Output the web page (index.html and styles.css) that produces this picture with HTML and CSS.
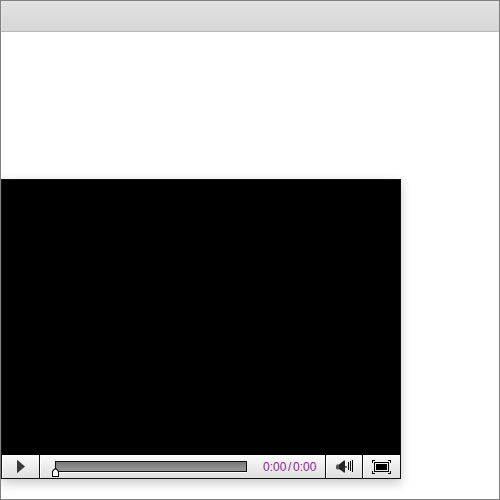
FILE: index.html
```
<!DOCTYPE html>
<html lang="en">
<head>
<meta charset="utf-8">
<title>Video player</title>
<link rel="stylesheet" href="styles.css">
</head>
<body>
<div class="window">
  <header class="toolbar"></header>
  <main class="player">
    <div class="screen"></div>
    <div class="controls">
      <button class="btn play" aria-label="Play">
        <svg width="10" height="15" viewBox="0 0 10 15"><path d="M1 .8L9 7.5L1 14.2Z" fill="#3a3a3a"/></svg>
      </button>
      <div class="timeline">
        <div class="track">
          <svg class="handle" width="7" height="9" viewBox="0 0 7 9"><path d="M0 9V3L1 2L2 1L3 0H4L5 1L6 2L7 3V9Z" fill="#000"/><path d="M1 8V3.5L3 1.5H4L6 3.5V8Z" fill="#fff"/></svg>
        </div>
        <div class="time"><span>0:00</span><span class="slash">/</span><span>0:00</span></div>
      </div>
      <button class="btn volume" aria-label="Volume">
        <svg width="17" height="14" viewBox="0 0 17 14"><path d="M0 5.5L1 4.5H3V9.5H1L0 8.5Z" fill="#555"/><path d="M3 4.5L8 .5H9V12.5H8L3 9Z" fill="#262626"/><path d="M9 6H11V8H9Z" fill="#666"/><path d="M12 2H13V10H12ZM14 1H15V11H14ZM16 0H17V12H16Z" fill="#000"/></svg>
      </button>
      <button class="btn full" aria-label="Full screen">
        <svg width="19" height="14" viewBox="0 0 19 14"><path d="M.5 3V.5H3M16 .5H18.5V3M18.5 11V13.5H16M3 13.5H.5V11M2.5 2.5H16.5V11.5H2.5Z" fill="none" stroke="#000"/><path d="M4 4H15V10H4Z" fill="#000"/></svg>
      </button>
    </div>
  </main>
</div>
</body>
</html>
```
FILE: styles.css
```
* { box-sizing: border-box; }
body { margin: 0; background: #fff; font-family: Arial, "Liberation Sans", sans-serif; }
.window { width: 500px; height: 500px; border: 1px solid #808080; overflow: hidden; background: #fff; }
.toolbar { height: 31px; border-bottom: 1px solid #b8b8b8; background: linear-gradient(#e2e2e2, #d7d7d7); box-shadow: inset 1px 1px #e8e4e4; }
.player { width: 400px; height: 300px; margin-top: 147px; border: 1px solid #111; background: #000; box-shadow: 0 4px 10px rgba(0, 0, 0, .22); }
.screen { height: 275px; background: #000; }
.controls { display: flex; height: 23px; background: linear-gradient(#fbfbfb, #dfdfdf); }
.btn { display: flex; align-items: center; justify-content: center; padding: 0; border: 0; background: none; box-shadow: inset 1px 1px #fff; }
.btn svg, .handle { display: block; }
.play { width: 38px; border-right: 1px solid #111; }
.timeline { flex: 1; display: flex; align-items: center; padding-left: 15px; box-shadow: inset 1px 1px #fff; }
.track { position: relative; width: 192px; height: 11px; border: 1px solid #111; background: linear-gradient(#777, #9a9a9a); box-shadow: 0 1px #fff; }
.handle { position: absolute; left: -4px; top: 6px; }
.time { display: flex; margin-left: 16px; font-size: 12px; line-height: 14px; color: #912390; }
.slash { width: 6.6px; text-align: center; }
.volume { width: 37px; padding: 1px 0 0 1px; border-left: 1px solid #111; }
.full { width: 38px; padding-top: 1px; border-left: 1px solid #111; }
.full svg { shape-rendering: crispEdges; }
```
